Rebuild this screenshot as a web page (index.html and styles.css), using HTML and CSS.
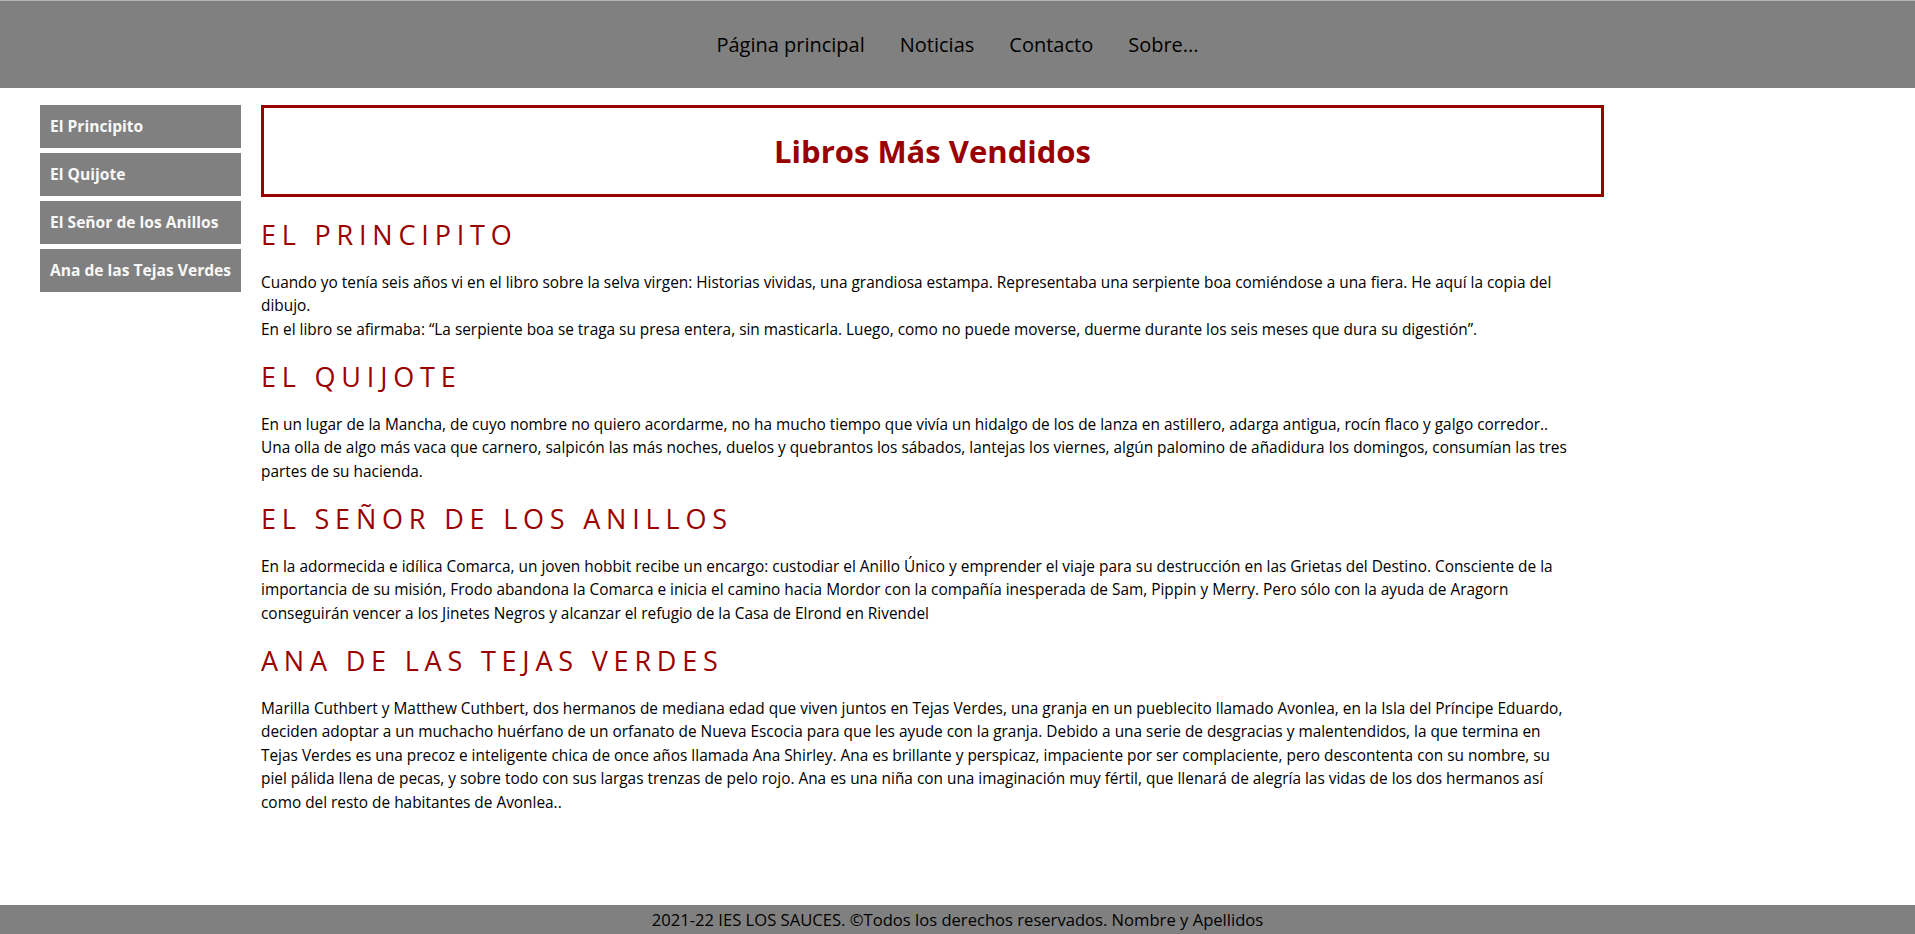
FILE: index.html
```html
<!DOCTYPE html>
<html lang="es">
<head>
<meta charset="utf-8">
<title>Libros Más Vendidos</title>
<link rel="stylesheet" href="styles.css">
</head>
<body>
<header class="top">
  <nav class="menu">
    <a href="#">Página principal</a>
    <a href="#">Noticias</a>
    <a href="#">Contacto</a>
    <a href="#">Sobre...</a>
  </nav>
</header>
<div class="page">
  <aside class="side">
    <a href="#">El Principito</a>
    <a href="#">El Quijote</a>
    <a href="#">El Señor de los Anillos</a>
    <a href="#">Ana de las Tejas Verdes</a>
  </aside>
  <main class="content">
    <div class="title-box"><h1>Libros Más Vendidos</h1></div>
    <section class="book">
      <h2>El Principito</h2>
      <p>Cuando yo tenía seis años vi en el libro sobre la selva virgen: Historias vividas, una grandiosa estampa. Representaba una serpiente boa comiéndose a una fiera. He aquí la copia del<br>dibujo.<br>En el libro se afirmaba: “La serpiente boa se traga su presa entera, sin masticarla. Luego, como no puede moverse, duerme durante los seis meses que dura su digestión”.</p>
    </section>
    <section class="book">
      <h2>El Quijote</h2>
      <p>En un lugar de la Mancha, de cuyo nombre no quiero acordarme, no ha mucho tiempo que vivía un hidalgo de los de lanza en astillero, adarga antigua, rocín flaco y galgo corredor..<br>Una olla de algo más vaca que carnero, salpicón las más noches, duelos y quebrantos los sábados, lantejas los viernes, algún palomino de añadidura los domingos, consumían las tres<br>partes de su hacienda.</p>
    </section>
    <section class="book">
      <h2>El Señor de los Anillos</h2>
      <p>En la adormecida e idílica Comarca, un joven hobbit recibe un encargo: custodiar el Anillo Único y emprender el viaje para su destrucción en las Grietas del Destino. Consciente de la<br>importancia de su misión, Frodo abandona la Comarca e inicia el camino hacia Mordor con la compañía inesperada de Sam, Pippin y Merry. Pero sólo con la ayuda de Aragorn<br>conseguirán vencer a los Jinetes Negros y alcanzar el refugio de la Casa de Elrond en Rivendel</p>
    </section>
    <section class="book">
      <h2>Ana de las Tejas Verdes</h2>
      <p>Marilla Cuthbert y Matthew Cuthbert, dos hermanos de mediana edad que viven juntos en Tejas Verdes, una granja en un pueblecito llamado Avonlea, en la Isla del Príncipe Eduardo,<br>deciden adoptar a un muchacho huérfano de un orfanato de Nueva Escocia para que les ayude con la granja. Debido a una serie de desgracias y malentendidos, la que termina en<br>Tejas Verdes es una precoz e inteligente chica de once años llamada Ana Shirley. Ana es brillante y perspicaz, impaciente por ser complaciente, pero descontenta con su nombre, su<br>piel pálida llena de pecas, y sobre todo con sus largas trenzas de pelo rojo. Ana es una niña con una imaginación muy fértil, que llenará de alegría las vidas de los dos hermanos así<br>como del resto de habitantes de Avonlea..</p>
    </section>
  </main>
</div>
<footer class="foot">2021-22 IES LOS SAUCES. ©Todos los derechos reservados. Nombre y Apellidos</footer>
</body>
</html>
```
FILE: styles.css
```css
html, body {
  height: 100%;
}
body {
  margin: 0;
  font-family: "Open Sans", "DejaVu Sans", sans-serif;
  color: #000;
  display: flex;
  flex-direction: column;
  min-height: 100vh;
}
.top {
  background: #808080;
  border-top: 1px solid #b4b4b4;
  height: 87px;
  display: flex;
  align-items: center;
  justify-content: center;
  flex: none;
}
.menu {
  display: flex;
  gap: 35px;
}
.menu a {
  color: #000;
  text-decoration: none;
  font-size: 20px;
}
.page {
  display: flex;
  gap: 20px;
  padding: 17px 0 0 40px;
}
.side {
  width: 201px;
  flex: none;
  display: flex;
  flex-direction: column;
  gap: 5px;
}
.side a {
  display: block;
  height: 43px;
  line-height: 43px;
  background: #808080;
  color: #f8f8f8;
  font-weight: bold;
  font-size: 15.6px;
  padding-left: 10px;
  text-decoration: none;
}
.content {
  width: 1343px;
  flex: none;
}
.title-box {
  border: 3px solid #990000;
  height: 86px;
  margin-bottom: 20px;
  display: flex;
  align-items: center;
  justify-content: center;
}
.title-box h1 {
  margin: 0;
  color: #990000;
  font-size: 31px;
  font-weight: bold;
}
.book h2 {
  margin: 17.75px 0;
  color: #990000;
  font-size: 27px;
  font-weight: normal;
  line-height: 36px;
  letter-spacing: 5.8px;
  text-transform: uppercase;
}
.book p {
  margin: 0;
  font-size: 15.4px;
  line-height: 23.5px;
}
.foot {
  margin-top: auto;
  flex: none;
  background: #808080;
  height: 29px;
  line-height: 29px;
  text-align: center;
  font-size: 16.6px;
}
```
